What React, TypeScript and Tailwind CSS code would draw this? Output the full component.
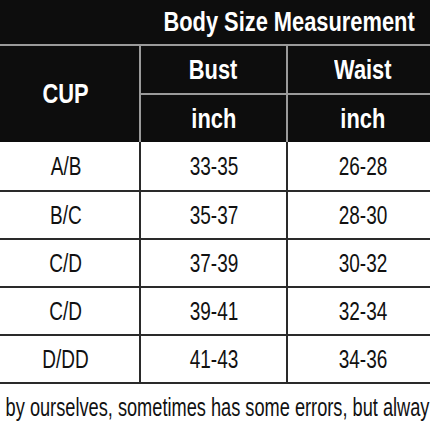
const sans = { fontFamily: '"Liberation Sans", Arial, sans-serif' };

const rows = [
  ['A/B', '33-35', '26-28'],
  ['B/C', '35-37', '28-30'],
  ['C/D', '37-39', '30-32'],
  ['C/D', '39-41', '32-34'],
  ['D/DD', '41-43', '34-36'],
];

function Head({ children }: { children: React.ReactNode }) {
  return <span className="inline-block whitespace-nowrap scale-x-[0.78] text-[28px] leading-none">{children}</span>;
}

function Cell({ children }: { children: React.ReactNode }) {
  return <span className="inline-block whitespace-nowrap scale-x-[0.76] text-[25px] leading-none">{children}</span>;
}

export default function App() {
  return (
    <div className="w-[430px] h-[430px] overflow-hidden bg-white" style={sans}>
      <div className="ml-[-7px] w-[445px]">
        <div className="grid grid-cols-[148px_147px_150px] grid-rows-[46px_49px_47px] bg-[#0d0d0d] text-white font-bold">
          <div className="border-b-2 border-[#9a9a9a]" />
          <div className="col-span-2 border-b-2 border-[#9a9a9a] flex items-center justify-center">
            <Head>Body Size Measurement</Head>
          </div>
          <div className="row-span-2 border-r-2 border-[#9a9a9a] flex items-center justify-center"><Head>CUP</Head></div>
          <div className="border-r-2 border-b-2 border-[#9a9a9a] flex items-center justify-center"><Head>Bust</Head></div>
          <div className="border-b-2 border-[#9a9a9a] flex items-center justify-center"><Head>Waist</Head></div>
          <div className="border-r-2 border-[#9a9a9a] flex items-center justify-center"><Head>inch</Head></div>
          <div className="flex items-center justify-center"><Head>inch</Head></div>
        </div>
        {rows.map((r, i) => (
          <div
            key={i}
            className={`grid grid-cols-[148px_147px_150px] border-b-2 border-[#2a2a2a] text-[#111] ${i === 0 ? 'h-[50px]' : 'h-[48px]'}`}
          >
            <div className="border-r-2 border-[#2a2a2a] flex items-center justify-center"><Cell>{r[0]}</Cell></div>
            <div className="border-r-2 border-[#2a2a2a] flex items-center justify-center"><Cell>{r[1]}</Cell></div>
            <div className="flex items-center justify-center"><Cell>{r[2]}</Cell></div>
          </div>
        ))}
      </div>
      <div className="pt-[10px] whitespace-nowrap text-[#111]">
        <span className="inline-block origin-left scale-x-[0.7] pl-[8px] text-[26px] leading-none">
          by ourselves, sometimes has some errors, but alway
        </span>
      </div>
    </div>
  );
}
